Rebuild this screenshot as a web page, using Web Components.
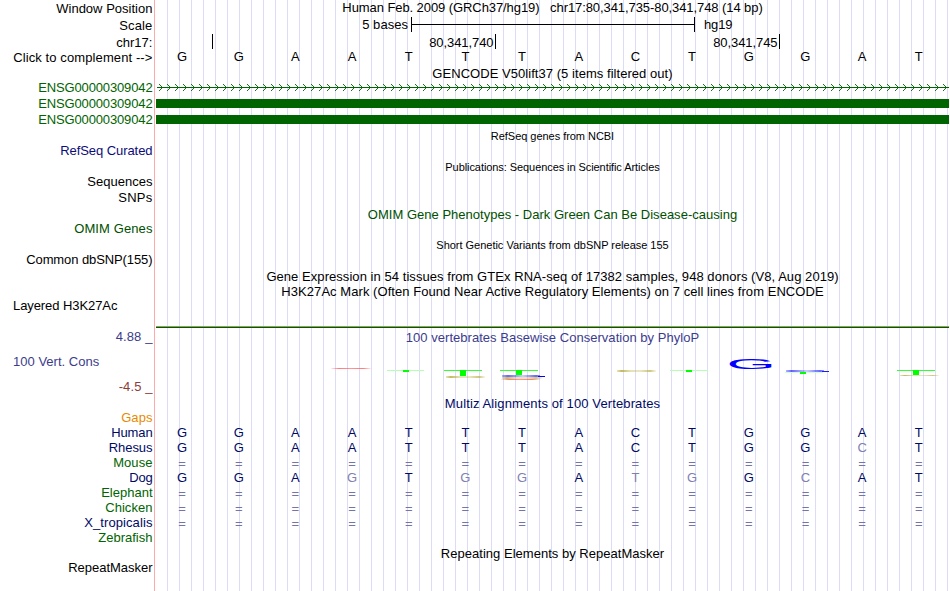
<!DOCTYPE html>
<html lang="en">
<head>
<meta charset="utf-8">
<title>Genome Browser</title>
<style>
  body {
    margin: 0;
    background: #fff;
    overflow: hidden;
  }
</style>
</head>
<body>
<genome-browser></genome-browser>

<script>
// Text run whose tracking is adjusted to a given width
class FitText extends HTMLElement {
  constructor() {
    super();
    this.attachShadow({ mode: "open" });
  }

  connectedCallback() {
    // white-space is pre here, so no line breaks around the slot
    this.shadowRoot.innerHTML = `<style>
        :host {
          display: inline-block;
          white-space: pre;
        }
      </style><slot></slot>`;

    const width = Number(this.getAttribute("width"));
    if (width) {
      const natural = this.getBoundingClientRect().width;
      const spacing = (width + 0.3 - natural) / this.textContent.length;
      this.style.letterSpacing = spacing.toFixed(3) + "px";
    }
  }
}

class TrackRow extends HTMLElement {
  constructor() {
    super();
    this.attachShadow({ mode: "open" });
  }

  connectedCallback() {
    this.shadowRoot.innerHTML = `
      <style>
        :host {
          display: flex;
          height: ${this.getAttribute("height")}px;
          line-height: 15px;
        }

        .label {
          flex: none;
          width: 152.5px;
          margin-right: 3.5px;
          text-align: right;
          white-space: nowrap;
        }

        .plot {
          flex: none;
          width: 793px;
        }
      </style>

      <div class="label"><slot name="label"></slot></div>
      <div class="plot"><slot></slot></div>
    `;
  }
}

class TrackTitle extends HTMLElement {
  constructor() {
    super();
    this.attachShadow({ mode: "open" });
  }

  connectedCallback() {
    this.shadowRoot.innerHTML = `
      <style>
        :host {
          display: block;
          text-align: center;
          white-space: nowrap;
        }

        :host([small]) {
          padding-top: 1px;
          font-size: 11px;
        }
      </style>
      <slot></slot>
    `;
  }
}

class ScaleBar extends HTMLElement {
  constructor() {
    super();
    this.attachShadow({ mode: "open" });
  }

  connectedCallback() {
    this.shadowRoot.innerHTML = `
      <style>
        :host {
          display: flex;
          height: 15px;
          margin-top: -1px;
        }

        .left {
          width: 252px;
          margin-right: 3px;
          text-align: right;
        }

        .bar {
          display: flex;
          align-items: center;
          box-sizing: border-box;
          width: 284px;
          margin-right: 9px;
          border: solid #000;
          border-width: 0 1px;
        }

        .bar::before {
          content: "";
          flex: 1;
          height: 1px;
          background: #000;
        }
      </style>

      <div class="left"><fit-text width="45.5">5 bases</fit-text></div>
      <div class="bar"></div>
      <fit-text width="28">hg19</fit-text>
    `;
  }
}

class PositionRuler extends HTMLElement {
  constructor() {
    super();
    this.attachShadow({ mode: "open" });
  }

  connectedCallback() {
    this.shadowRoot.innerHTML = `
      <style>
        :host {
          display: flex;
          height: 15px;
        }

        div {
          box-sizing: border-box;
          height: 15px;
          margin-top: -1px;
          padding: 1px 1.5px 0 0;
          border-right: 1px solid #000;
          text-align: right;
        }
      </style>

      <div style="width: 57px"></div>
      <div style="width: 283px"><fit-text width="64">80,341,740</fit-text></div>
      <div style="width: 284px"><fit-text width="64">80,341,745</fit-text></div>
    `;
  }
}

// One letter per base; lowercase letters are mismatches and drawn dimmed
class BaseRow extends HTMLElement {
  constructor() {
    super();
    this.attachShadow({ mode: "open" });
  }

  connectedCallback() {
    const cells = [...this.getAttribute("bases")].map(base => {
      if (base === "=") return `<span class="gap">=</span>`;
      const dim = base !== base.toUpperCase();
      return `<span class="${dim ? "dim" : ""}">${base.toUpperCase()}</span>`;
    });

    this.shadowRoot.innerHTML = `
      <style>
        :host {
          display: grid;
          grid-template-columns: repeat(14, 56.68px);
          margin-left: -2.3px;
          text-align: center;
        }

        .dim {
          color: #8080b0;
        }

        .gap {
          padding-top: 1px;
          color: #7474a8;
        }
      </style>
      ${cells.join("")}
    `;
  }
}

class GeneModel extends HTMLElement {
  constructor() {
    super();
    this.attachShadow({ mode: "open" });
  }

  connectedCallback() {
    const exon = this.getAttribute("type") === "exon";
    let arrows = "";
    for (let x = 6; x < 793; x += 8) {
      arrows += `M${x - 3} 0.5l3.5 3.5l-3.5 3.5`;
    }

    this.shadowRoot.innerHTML = `
      <style>
        :host {
          display: block;
          padding-top: 3px;
        }

        .exon {
          width: 793px;
          height: 9px;
          background: #006400;
        }

        svg {
          display: block;
          margin-top: 1px;
        }
      </style>
      ${exon ? `<div class="exon"></div>` : `
        <svg width="793" height="8">
          <path d="M1 3h792v1H1z" fill="#006400"/>
          <path d="${arrows}" transform="translate(0 -0.5)" fill="none" stroke="#006400" stroke-width="0.9"/>
        </svg>`}
    `;
  }
}

class ConservationPlot extends HTMLElement {
  constructor() {
    super();
    this.attachShadow({ mode: "open" });
  }

  connectedCallback() {
    this.shadowRoot.innerHTML = `
      <style>
        :host {
          display: grid;
          height: 70px;
          color: #3c3c8c;
        }

        svg, .title {
          grid-area: 1 / 1;
        }

        svg {
          display: block;
        }

        .title {
          width: 793px;
          padding-top: 4px;
        }

        text {
          font-size: 16px;
        }
      </style>

      <svg width="794" height="70" viewBox="156 326 794 70">
        <defs>
          <linearGradient id="red">
            <stop offset="0" stop-color="#ff5050" stop-opacity="0.1"/>
            <stop offset="0.2" stop-color="#ff5050" stop-opacity="0.75"/>
            <stop offset="0.5" stop-color="#ff5050" stop-opacity="0.6"/>
            <stop offset="0.8" stop-color="#ff5050" stop-opacity="0.75"/>
            <stop offset="1" stop-color="#ff5050" stop-opacity="0.1"/>
          </linearGradient>
          <linearGradient id="khaki">
            <stop offset="0" stop-color="#b4aa32" stop-opacity="0.3"/>
            <stop offset="0.12" stop-color="#b4aa32" stop-opacity="0.8"/>
            <stop offset="0.35" stop-color="#b4aa32" stop-opacity="0.35"/>
            <stop offset="0.6" stop-color="#b4aa32" stop-opacity="0.3"/>
            <stop offset="0.85" stop-color="#b4aa32" stop-opacity="0.65"/>
            <stop offset="1" stop-color="#b4aa32" stop-opacity="0.1"/>
          </linearGradient>
          <linearGradient id="blue">
            <stop offset="0" stop-color="#0000ff" stop-opacity="0.3"/>
            <stop offset="0.15" stop-color="#0000ff" stop-opacity="0.6"/>
            <stop offset="0.55" stop-color="#0000ff" stop-opacity="0.2"/>
            <stop offset="0.9" stop-color="#0000ff" stop-opacity="0.6"/>
            <stop offset="1" stop-color="#0000ff" stop-opacity="0.4"/>
          </linearGradient>
        </defs>

        <rect x="156" y="326" width="793" height="1" fill="#50c83c"/>
        <rect x="156" y="327" width="793" height="1" fill="#46321e"/>

        <rect x="331" y="368" width="40" height="1" fill="url(#red)"/>

        <rect x="387" y="370" width="37" height="1" fill="#b4ffb4"/>
        <rect x="403" y="370" width="6" height="2" fill="#00ff00"/>

        <rect x="444" y="370" width="38" height="1" fill="#32ff32"/>
        <rect x="460" y="370" width="6" height="6" fill="#00ff00"/>
        <rect x="446" y="376" width="39" height="2" fill="url(#khaki)"/>

        <rect x="500" y="370" width="38" height="1" fill="#32ff32"/>
        <rect x="516" y="370" width="6" height="5" fill="#00ff00"/>
        <rect x="502" y="375" width="38" height="2" fill="url(#blue)"/>
        <rect x="538" y="376" width="7" height="1" fill="#0000ff"/>
        <rect x="502" y="377" width="40" height="2" fill="url(#khaki)"/>
        <rect x="501" y="379" width="39" height="1" fill="url(#red)"/>

        <rect x="617" y="370" width="39" height="2" fill="url(#khaki)"/>

        <rect x="670" y="370" width="38" height="1" fill="#b4ffb4"/>
        <rect x="686" y="370" width="6" height="2" fill="#00ff00"/>

        <text transform="translate(726.4 369.3) scale(3.97 0.9)" fill="#0000ff">G</text>

        <rect x="786" y="370" width="38" height="2" fill="url(#blue)"/>
        <rect x="822" y="371" width="7" height="1" fill="#1e1ee6"/>
        <rect x="785" y="372" width="38" height="1" fill="#d2ffd2"/>
        <rect x="800" y="372" width="6" height="2" fill="#00ff00"/>

        <rect x="897" y="370" width="38" height="1" fill="#32ff32"/>
        <rect x="913" y="370" width="6" height="5" fill="#00ff00"/>
        <rect x="900" y="375" width="39" height="1" fill="url(#khaki)"/>
      </svg>
      <track-title class="title"><fit-text width="293">100 vertebrates Basewise Conservation by PhyloP</fit-text></track-title>
    `;
  }
}

class ConservationAxis extends HTMLElement {
  constructor() {
    super();
    this.attachShadow({ mode: "open" });
  }

  connectedCallback() {
    this.shadowRoot.innerHTML = `
      <style>
        :host {
          display: flex;
          flex-direction: column;
          gap: 10px;
          padding-top: 3px;
          color: #3c3c8c;
        }

        .name {
          padding-left: 13px;
          text-align: left;
        }

        .min {
          color: #8c3c3c;
        }
      </style>

      <div><fit-text width="36.5">4.88 _</fit-text></div>
      <div class="name"><fit-text width="86">100 Vert. Cons</fit-text></div>
      <div class="min"><fit-text width="33.5">-4.5 _</fit-text></div>
    `;
  }
}

const NAVY = "#000a64";
const GREEN = "#006400";

// [height, label, label width, label colour, plot markup]
const title = (text, width, attrs = "") =>
  `<track-title ${attrs}><fit-text width="${width}">${text}</fit-text></track-title>`;
const bases = (seq, style) => `<base-row bases="${seq}" style="${style}"></base-row>`;

const rows = [
  [17, "Window Position", 96, "#000", title("Human Feb. 2009 (GRCh37/hg19)   chr17:80,341,735-80,341,748 (14 bp)", 420, `style="margin-top: -1px"`)],
  [17, "Scale", 33, "#000", `<scale-bar></scale-bar>`],
  [15, "chr17:", 36, "#000", `<position-ruler></position-ruler>`],
  [16, "Click to complement --&gt;", 139, "#000", bases("GGAATTTACTGGAT", "margin-top: -1px")],
  [14, "", 0, "#000", title("GENCODE V50lift37 (5 items filtered out)", 240)],
  [16, "ENSG00000309042", 114, GREEN, `<gene-model type="intron"></gene-model>`],
  [16, "ENSG00000309042", 114, GREEN, `<gene-model type="exon"></gene-model>`],
  [16, "ENSG00000309042", 114, GREEN, `<gene-model type="exon"></gene-model>`],
  [15, "", 0, "#000", title("RefSeq genes from NCBI", 123, "small")],
  [16, "RefSeq Curated", 92, "#0c0c78", ""],
  [15, "", 0, "#000", title("Publications: Sequences in Scientific Articles", 214, "small")],
  [16, "Sequences", 65, "#000", ""],
  [17, "SNPs", 34, "#000", ""],
  [14, "", 0, "#000", title("OMIM Gene Phenotypes - Dark Green Can Be Disease-causing", 369, `style="color: #005000"`)],
  [16, "OMIM Genes", 78, "#005000", ""],
  [15, "", 0, "#000", title("Short Genetic Variants from dbSNP release 155", 232, "small")],
  [17, "Common dbSNP(155)", 126, "#000", ""],
  [15, "", 0, "#000", title("Gene Expression in 54 tissues from GTEx RNA-seq of 17382 samples, 948 donors (V8, Aug 2019)", 572)],
  [14, "", 0, "#000", title("H3K27Ac Mark (Often Found Near Active Regulatory Elements) on 7 cell lines from ENCODE", 542)],
  [28, "Layered H3K27Ac", 104, "#000", "", "left"],
  [70, null, 0, "", `<conservation-plot></conservation-plot>`],
  [14, "", 0, "#000", title("Multiz Alignments of 100 Vertebrates", 215, `style="color: ${NAVY}"`)],
  [15, "Gaps", 31, "#e88a00", ""],
  [15, "Human", 41, NAVY, bases("GGAATTTACTGGAT", `color: ${NAVY}`)],
  [15, "Rhesus", 43.5, NAVY, bases("GGAATTTACTGGcT", `color: ${NAVY}`)],
  [15, "Mouse", 39, GREEN, bases("==============", "")],
  [15, "Dog", 23, NAVY, bases("GGAgTggAtgGcAT", `color: ${NAVY}`)],
  [15, "Elephant", 51, GREEN, bases("==============", "")],
  [15, "Chicken", 47, GREEN, bases("==============", "")],
  [15, "X_tropicalis", 68, NAVY, bases("==============", "")],
  [16, "Zebrafish", 54, GREEN, ""],
  [14, "", 0, "#000", title("Repeating Elements by RepeatMasker", 223)],
  [31, "RepeatMasker", 84, "#000", ""]
];

class GenomeBrowser extends HTMLElement {
  constructor() {
    super();
    this.attachShadow({ mode: "open" });
  }

  connectedCallback() {
    this.render();
  }

  renderLabel([, label, width, color, , align]) {
    if (label === null) return `<conservation-axis slot="label"></conservation-axis>`;
    if (!label) return "";
    return `<div slot="label" class="${align || ""}" style="color: ${color}"><fit-text width="${width}">${label}</fit-text></div>`;
  }

  render() {
    this.shadowRoot.innerHTML = `
      <style>
        :host {
          display: block;
          box-sizing: border-box;
          width: 950px;
          height: 591px;
          padding-top: 1px;
          overflow: hidden;
          color: #000;
          font: 13px/15px "Liberation Sans", Arial, sans-serif;
          background:
            linear-gradient(#ffaaaa, #ffaaaa) 154px 0 / 1px 100% no-repeat,
            repeating-linear-gradient(to right, #dcdcf8 0 1px, transparent 1px 12px) 167px 0 / 783px 100% no-repeat,
            #fff;
        }

        .left {
          padding-left: 13px;
          text-align: left;
        }
      </style>

      ${rows.map(row => `
        <track-row height="${row[0]}">
          ${this.renderLabel(row)}
          ${row[4]}
        </track-row>`).join("")}
    `;
  }
}

customElements.define("track-row", TrackRow);
customElements.define("track-title", TrackTitle);
customElements.define("fit-text", FitText);
customElements.define("scale-bar", ScaleBar);
customElements.define("position-ruler", PositionRuler);
customElements.define("base-row", BaseRow);
customElements.define("gene-model", GeneModel);
customElements.define("conservation-plot", ConservationPlot);
customElements.define("conservation-axis", ConservationAxis);
customElements.define("genome-browser", GenomeBrowser);
</script>
</body>
</html>
